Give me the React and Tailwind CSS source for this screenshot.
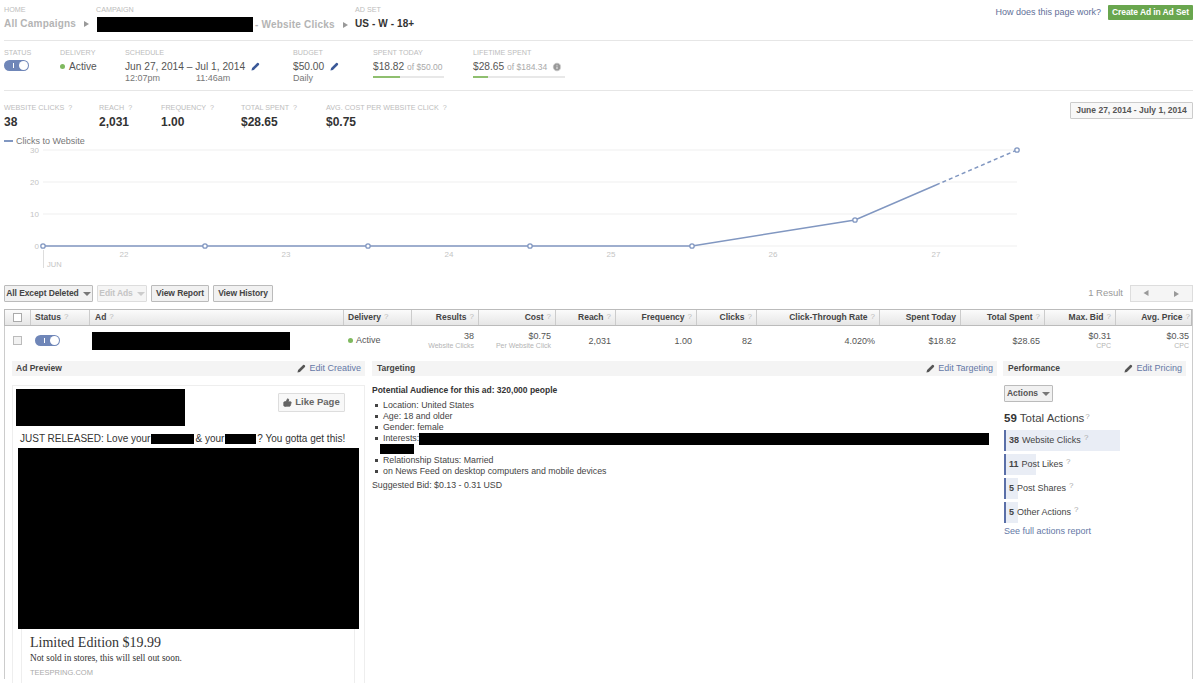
import React from 'react';
import { ThumbsUp, Info } from 'lucide-react';

const COLS = 'grid grid-cols-[26px_59px_254px_68px_67px_77px_60px_81px_60px_123px_81px_84px_71px_78px]';

function Q() {
  return <sup className="ml-[3px] text-[8px] font-normal text-[#bbb] top-[-1px]">?</sup>;
}

function Pencil({ className = 'text-[#3b5998]' }) {
  return (
    <svg viewBox="0 0 10 10" className={`w-[9px] h-[9px] inline-block ${className}`}>
      <path d="M0.5 9.5 L1.2 6.8 L6.8 1.2 Q7.6 0.4 8.6 1.4 Q9.6 2.4 8.8 3.2 L3.2 8.8 Z" fill="currentColor" />
    </svg>
  );
}

function Toggle() {
  return (
    <div className="w-[25px] h-[11px] rounded-full bg-[#6f86b8] flex items-center justify-end pr-[1px] relative">
      <div className="absolute left-[9px] top-[3px] w-[1px] h-[5px] bg-white" />
      <div className="w-[9px] h-[9px] rounded-full bg-white" />
    </div>
  );
}

function Dot() {
  return <span className="inline-block w-[5px] h-[5px] rounded-full bg-[#7fb95f] shrink-0" />;
}

function Arrow() {
  return <span className="inline-block w-0 h-0 border-y-[3.5px] border-y-transparent border-l-[5px] border-l-[#999]" />;
}

function Caret({ color = 'border-t-[#777]' }) {
  return <span className={`inline-block w-0 h-0 border-x-[4px] border-x-transparent border-t-[4px] ${color}`} />;
}

function Label({ children, className = '' }) {
  return <div className={`text-[7.2px] leading-[10px] uppercase text-[#bdbdbd] whitespace-nowrap ${className}`}>{children}</div>;
}

function Meter({ w, outer = 'w-[92px]' }) {
  return (
    <div className={`h-[2px] bg-[#e8e8e8] mt-[2px] ${outer}`}>
      <div className={`h-full bg-[#8fbf6f] ${w}`} />
    </div>
  );
}

function ToolButton({ children, muted, width }) {
  return (
    <button className={`h-[17px] flex items-center justify-center gap-[4px] border rounded-[1px] text-[8.5px] tracking-[-0.1px] font-bold whitespace-nowrap ${width} ${muted ? 'border-[#ddd] bg-[#f5f5f5] text-[#c4c4c4]' : 'border-[#bbb] bg-[#f1f1f1] text-[#444]'}`}>
      {children}
    </button>
  );
}

function Chart() {
  const pts = [43, 205, 368, 530, 692, 855, 1017];
  const ys = [246, 246, 246, 246, 246, 220, 150];
  return (
    <svg width="1040" height="125" viewBox="0 145 1040 125" className="block">
      {[[150, '30'], [182, '20'], [214, '10'], [246, '0']].map(([y, t]) => (
        <g key={t}>
          <line x1="43" x2="1017" y1={y} y2={y} stroke="#efefef" />
          <text x="39" y={y + 3} textAnchor="end" fontSize="8" fill="#c4c4c4">{t}</text>
        </g>
      ))}
      {[[124, '22'], [286, '23'], [449, '24'], [611, '25'], [773, '26'], [936, '27']].map(([x, t]) => (
        <text key={t} x={x} y="257" textAnchor="middle" fontSize="8" fill="#c4c4c4">{t}</text>
      ))}
      <line x1="43.5" x2="43.5" y1="250" y2="268" stroke="#ddd" />
      <text x="47" y="267" fontSize="7.5" fill="#c4c4c4">JUN</text>
      <polyline points="43,246 692,246 855,220 936,185" fill="none" stroke="#8197c1" strokeWidth="1.5" />
      <line x1="936" y1="185" x2="1017" y2="150" stroke="#8197c1" strokeWidth="1.5" strokeDasharray="4 3" />
      {pts.map((x, i) => (
        <circle key={x} cx={x} cy={ys[i]} r="2.2" fill="#fff" stroke="#8197c1" strokeWidth="1.3" />
      ))}
    </svg>
  );
}

const HEADS = [
  ['Delivery', 'left'], ['Results', 'right'], ['Cost', 'right'], ['Reach', 'right'], ['Frequency', 'right'], ['Clicks', 'right'],
  ['Click-Through Rate', 'right'], ['Spent Today', 'right', true], ['Total Spent', 'right'], ['Max. Bid', 'right'], ['Avg. Price', 'right'],
];

function ActionBar({ n, label, w }) {
  return (
    <div className="relative h-[21px] w-[116px] mb-[3px] flex items-center pl-[5px] whitespace-nowrap text-[9px] text-[#444]">
      <div className={`absolute left-0 top-0 bottom-0 bg-[#e9edf5] border-l-2 border-[#5a6fa8] ${w}`} />
      <span className="relative font-bold mr-[3px]">{n}</span>
      <span className="relative">{label}</span>
      <span className="relative -top-[3px] ml-[3px] text-[8px] text-[#aaa]">?</span>
    </div>
  );
}

function PanelHead({ title, edit, className = 'pl-[4px]' }) {
  return (
    <div className={`h-[15px] bg-[#f4f4f4] flex items-center justify-between pr-[4px] ${className}`}>
      <span className="text-[8.5px] font-bold text-[#444]">{title}</span>
      {edit && (
        <span className="flex items-center gap-[3px] text-[9px] text-[#6478a6]">
          <Pencil className="text-[#555]" /> {edit}
        </span>
      )}
    </div>
  );
}

export default function App() {
  return (
    <div className="w-[1200px] h-[683px] overflow-hidden bg-white text-[#444] font-['Liberation_Sans',Arial,sans-serif]">
      {/* breadcrumb */}
      <header className="h-[41px] mx-[4px] w-[1189px] border-b border-[#e6e6e6] flex justify-between pt-[5px]">
        <div className="flex">
          <div className="w-[92px]">
            <Label>Home</Label>
            <div className="mt-[1px] flex items-center gap-[8px] text-[10px] font-bold text-[#b4b4b4] tracking-[0.2px] whitespace-nowrap">All Campaigns <Arrow /></div>
          </div>
          <div className="w-[259px]">
            <Label>Campaign</Label>
            <div className="mt-[2px] h-[15px] flex items-center gap-[2px] text-[10px] font-bold text-[#b4b4b4] tracking-[0.2px] whitespace-nowrap">
              <div className="w-[156px] h-[15px] bg-black ml-[1px]" />
              - Website Clicks <span className="ml-[6px] flex"><Arrow /></span>
            </div>
          </div>
          <div>
            <Label>Ad Set</Label>
            <div className="mt-[1px] text-[10px] font-bold text-[#333] tracking-[0.1px] whitespace-nowrap">US - W - 18+</div>
          </div>
        </div>
        <div className="flex items-start gap-[7px]">
          <span className="text-[9px] leading-[14px] text-[#5f6f98]">How does this page work?</span>
          <button className="h-[15px] w-[85px] bg-[#69a64e] text-white text-[8.5px] tracking-[-0.1px] font-bold rounded-[1px] whitespace-nowrap">Create Ad in Ad Set</button>
        </div>
      </header>

      {/* ad set summary */}
      <section className="h-[50px] mx-[4px] w-[1189px] border-b border-[#e6e6e6] flex pt-[7px]">
        <div className="w-[56px]">
          <Label>Status</Label>
          <div className="mt-[2px]"><Toggle /></div>
        </div>
        <div className="w-[65px]">
          <Label>Delivery</Label>
          <div className="mt-[2px] flex items-center gap-[4px] text-[10.2px] leading-[13px] text-[#555]"><Dot /> Active</div>
        </div>
        <div className="w-[168px]">
          <Label>Schedule</Label>
          <div className="mt-[2px] flex items-center gap-[6px] text-[10.2px] leading-[13px] text-[#555] whitespace-nowrap">Jun 27, 2014 – Jul 1, 2014 <Pencil /></div>
          <div className="flex text-[9px] leading-[10px] text-[#777]"><span className="w-[71px]">12:07pm</span><span>11:46am</span></div>
        </div>
        <div className="w-[80px]">
          <Label>Budget</Label>
          <div className="mt-[2px] flex items-center gap-[6px] text-[10.2px] leading-[13px] text-[#555]">$50.00 <Pencil /></div>
          <div className="text-[9px] leading-[10px] text-[#777]">Daily</div>
        </div>
        <div className="w-[100px]">
          <Label>Spent Today</Label>
          <div className="mt-[2px] text-[10.2px] leading-[13px] text-[#555] whitespace-nowrap">$18.82 <span className="text-[8.5px] text-[#aaa]">of $50.00</span></div>
          <Meter w="w-[27px]" outer="w-[71px]" />
        </div>
        <div>
          <Label>Lifetime Spent</Label>
          <div className="mt-[2px] flex items-center gap-[5px] text-[10.2px] leading-[13px] text-[#555] whitespace-nowrap">
            <span>$28.65 <span className="text-[8.5px] text-[#aaa]">of $184.34</span></span>
            <Info className="w-[10px] h-[10px] text-white fill-[#999]" />
          </div>
          <Meter w="w-[15px]" />
        </div>
      </section>

      {/* totals */}
      <section className="h-[45px] mx-[4px] w-[1189px] flex justify-between pt-[12px]">
        <div className="flex">
          {[['Website Clicks', '38', 'w-[95px]'], ['Reach', '2,031', 'w-[62px]'], ['Frequency', '1.00', 'w-[80px]'], ['Total Spent', '$28.65', 'w-[85px]'], ['Avg. Cost per Website Click', '$0.75', 'w-[140px]']].map(([l, v, w]) => (
            <div key={l} className={w}>
              <Label>{l} <span className="ml-[2px]">?</span></Label>
              <div className="mt-[2px] text-[12px] leading-[14px] font-bold text-[#333]">{v}</div>
            </div>
          ))}
        </div>
        <button className="-mt-[1px] h-[17px] w-[123px] border border-[#ccc] rounded-[1px] bg-[#f8f8f8] text-[8.5px] font-bold text-[#555] whitespace-nowrap">June 27, 2014 - July 1, 2014</button>
      </section>

      {/* chart */}
      <div className="h-[8px] mt-[1px] ml-[4px] flex items-center gap-[3px] text-[9px] text-[#777] leading-[8px]">
        <span className="w-[9px] h-[2px] bg-[#8197c1]" /> Clicks to Website
      </div>
      <Chart />

      {/* toolbar */}
      <div className="mt-[15px] ml-[4px] w-[1189px] h-[17px] flex items-center gap-[4px]">
        <ToolButton width="w-[89px]">All Except Deleted <Caret /></ToolButton>
        <ToolButton muted width="w-[50px]">Edit Ads <Caret color="border-t-[#ccc]" /></ToolButton>
        <ToolButton width="w-[58px]">View Report</ToolButton>
        <ToolButton width="w-[60px]">View History</ToolButton>
        <div className="ml-auto flex items-center gap-[7px]">
          <span className="text-[9.5px] text-[#999]">1 Result</span>
          <div className="flex w-[63px] h-[17px] border border-[#ddd] bg-[#f5f5f5]">
            <div className="flex-1 flex items-center justify-center rotate-180"><Arrow /></div>
            <div className="flex-1 flex items-center justify-center"><Arrow /></div>
          </div>
        </div>
      </div>

      {/* table */}
      <div className="mt-[7px] ml-[4px] w-[1189px] border-x border-[#ccc] h-[370px]">
        <div className={`${COLS} h-[17px] -ml-[1px] border border-[#bbb] bg-gradient-to-b from-[#fbfbfb] to-[#e6e6e6] text-[8.5px] font-bold text-[#444]`}>
          <div className="flex items-center justify-center border-r border-[#ccc]"><span className="w-[9px] h-[9px] border border-[#aaa] bg-white" /></div>
          <div className="flex items-center pl-[4px] border-r border-[#ccc]">Status<Q /></div>
          <div className="flex items-center pl-[5px] border-r border-[#ccc]">Ad<Q /></div>
          {HEADS.map(([h, align, noQ]) => (
            <div key={h} className={`flex items-center px-[4px] border-r border-[#ccc] last:border-r-0 whitespace-nowrap ${align === 'right' ? 'justify-end' : ''}`}>{h}{!noQ && <Q />}</div>
          ))}
        </div>

        <div className={`${COLS} h-[29px] -ml-[1px] text-[9px] text-[#555] items-center`}>
          <div className="flex justify-center"><span className="w-[9px] h-[9px] border border-[#bbb] bg-[#f2f2f2]" /></div>
          <div className="pl-[5px]"><Toggle /></div>
          <div className="pl-[3px]"><div className="w-[198px] h-[18px] bg-black" /></div>
          <div className="pl-[5px] flex items-center gap-[3px]"><Dot /> Active</div>
          <Cell v="38" sub="Website Clicks" />
          <Cell v="$0.75" sub="Per Website Click" />
          <Cell v="2,031" />
          <Cell v="1.00" />
          <Cell v="82" />
          <Cell v="4.020%" />
          <Cell v="$18.82" />
          <Cell v="$28.65" />
          <Cell v="$0.31" sub="CPC" />
          <Cell v="$0.35" sub="CPC" />
        </div>

        {/* details */}
        <div className="flex mt-[6px] pl-[7px]">
          <div className="w-[353px] mr-[7px]">
            <PanelHead title="Ad Preview" edit="Edit Creative" />
            <div className="mt-[9px] h-[400px] border border-[#eee] pl-[3px] pt-[3px]">
              <div className="flex justify-between items-start">
                <div className="w-[169px] h-[37px] bg-black" />
                <button className="mt-[4px] mr-[19px] h-[19px] w-[67px] border border-[#ddd] bg-[#f8f8f8] rounded-[1px] flex items-center justify-center gap-[3px] text-[9.5px] font-bold text-[#666]">
                  <ThumbsUp className="w-[9px] h-[9px] fill-[#666]" /> Like Page
                </button>
              </div>
              <div className="mt-[7px] ml-[4px] h-[11px] flex items-center text-[10px] leading-[11px] text-[#333] whitespace-nowrap">
                JUST RELEASED: Love your<span className="inline-block w-[43px] h-[10px] bg-black mx-[1px]" /> &amp; your<span className="inline-block w-[31px] h-[10px] bg-black mx-[1px]" />? You gotta get this!
              </div>
              <div className="mt-[4px] ml-[2px] w-[341px] h-[181px] bg-black" />
              <div className="ml-[5px] w-[334px] h-[60px] border-x border-[#eee] pl-[8px] font-['Liberation_Serif',serif]">
                <div className="pt-[5px] text-[14px] leading-[17px] text-[#333]">Limited Edition $19.99</div>
                <div className="mt-[1px] text-[9.3px] leading-[12px] text-[#333]">Not sold in stores, this will sell out soon.</div>
                <div className="mt-[4px] text-[7.5px] leading-[10px] text-[#aaa] font-['Liberation_Sans',sans-serif]">TEESPRING.COM</div>
              </div>
            </div>
          </div>

          <div className="w-[625px] mr-[6px]">
            <PanelHead title="Targeting" edit="Edit Targeting" className="pl-[5px]" />
            <div className="mt-[9px] text-[8.8px] leading-[11px] text-[#444]">
              <div className="font-bold text-[8.5px] text-[#333]">Potential Audience for this ad: 320,000 people</div>
              <ul className="mt-[4px] ml-[3px]">
                {['Location: United States', 'Age: 18 and older', 'Gender: female'].map(t => <Li key={t}>{t}</Li>)}
                <Li>Interests:<span className="inline-block w-[570px] h-[12px] bg-black align-top" /></Li>
                <li className="h-[11px] ml-[5px]"><div className="w-[34px] h-[10px] bg-black" /></li>
                <Li>Relationship Status: Married</Li>
                <Li>on News Feed on desktop computers and mobile devices</Li>
              </ul>
              <div className="mt-[3px]">Suggested Bid: $0.13 - 0.31 USD</div>
            </div>
          </div>

          <div className="w-[183px]">
            <PanelHead title="Performance" edit="Edit Pricing" className="pl-[5px]" />
            <div className="mt-[9px] ml-[1px]">
              <button className="h-[17px] w-[49px] border border-[#bbb] bg-[#f1f1f1] rounded-[1px] flex items-center justify-center gap-[4px] text-[8.5px] font-bold text-[#555]">Actions <Caret /></button>
              <div className="mt-[9px] mb-[3px] text-[11.5px] leading-[14px] text-[#444]"><b className="text-[#333]">59</b> Total Actions<span className="relative -top-[3px] ml-[1px] text-[8px] text-[#aaa]">?</span></div>
              <ActionBar n="38" label="Website Clicks" w="w-[116px]" />
              <ActionBar n="11" label="Post Likes" w="w-[32px]" />
              <ActionBar n="5" label="Post Shares" w="w-[14px]" />
              <ActionBar n="5" label="Other Actions" w="w-[14px]" />
              <div className="mt-[3px] text-[9px] leading-[11px] text-[#6478a6]">See full actions report</div>
            </div>
          </div>
        </div>
      </div>
    </div>
  );
}

function Cell({ v, sub }) {
  return (
    <div className="text-right pr-[4px] leading-[10px]">
      <div>{v}</div>
      {sub && <div className="text-[7px] leading-[9px] text-[#b4b4b4] whitespace-nowrap">{sub}</div>}
    </div>
  );
}

function Li({ children }) {
  return (
    <li className="flex items-center h-[11px] whitespace-nowrap">
      <span className="w-[3px] h-[3px] bg-[#444] mr-[5px] shrink-0" />
      {children}
    </li>
  );
}
